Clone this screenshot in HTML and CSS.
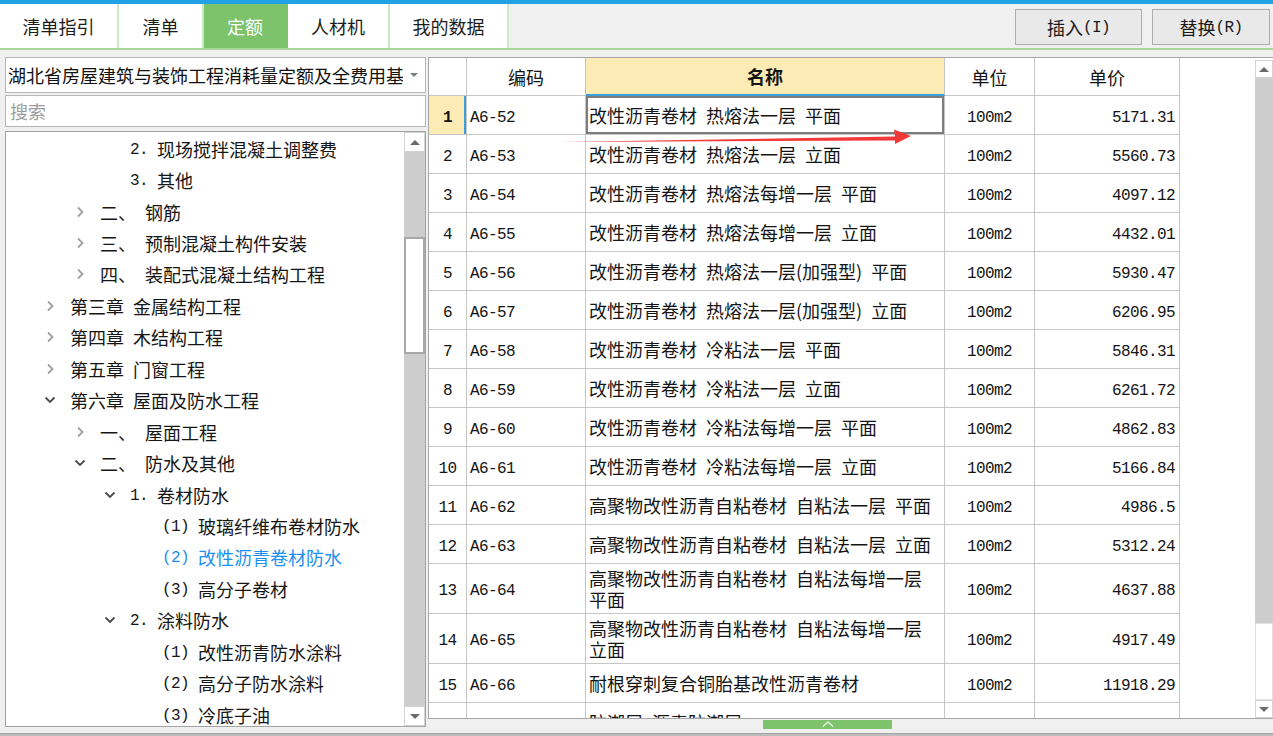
FILE: index.html
```html
<!DOCTYPE html>
<html lang="zh-CN">
<head>
<meta charset="utf-8">
<title>定额</title>
<link rel="stylesheet" href="styles.css">
</head>
<body>
<div class="app">
  <div class="topline"></div>
  <div class="toolbar">
    <div class="tabs">
      <div class="tab w1">清单指引</div>
      <div class="tab w2">清单</div>
      <div class="tab w3 active">定额</div>
      <div class="tab w4">人材机</div>
      <div class="tab w5">我的数据</div>
    </div>
    <div class="actions">
      <button class="btn b1">插入<span class="mono">(I)</span></button>
      <button class="btn b2">替换<span class="mono">(R)</span></button>
    </div>
  </div>

  <div class="main">
    <aside class="left">
      <div class="select">
        <span class="val">湖北省房屋建筑与装饰工程消耗量定额及全费用基价表（2018）</span>
        <span class="caret"></span>
      </div>
      <div class="search">搜索</div>
      <div class="treebox">
        <ul class="tree">
          <li class="l2"><span class="slot"></span><span class="pfx mono">2.</span><span>现场搅拌混凝土调整费</span></li>
          <li class="l2"><span class="slot"></span><span class="pfx mono">3.</span><span>其他</span></li>
          <li class="l1"><span class="slot"><svg class="chev" viewBox="0 0 12 12"><path d="M4 1.5 L8.5 6 L4 10.5"/></svg></span><span class="pfx cn">二、</span><span>钢筋</span></li>
          <li class="l1"><span class="slot"><svg class="chev" viewBox="0 0 12 12"><path d="M4 1.5 L8.5 6 L4 10.5"/></svg></span><span class="pfx cn">三、</span><span>预制混凝土构件安装</span></li>
          <li class="l1"><span class="slot"><svg class="chev" viewBox="0 0 12 12"><path d="M4 1.5 L8.5 6 L4 10.5"/></svg></span><span class="pfx cn">四、</span><span>装配式混凝土结构工程</span></li>
          <li class="l0"><span class="slot"><svg class="chev" viewBox="0 0 12 12"><path d="M4 1.5 L8.5 6 L4 10.5"/></svg></span><span class="pfx ch">第三章</span><span>金属结构工程</span></li>
          <li class="l0"><span class="slot"><svg class="chev" viewBox="0 0 12 12"><path d="M4 1.5 L8.5 6 L4 10.5"/></svg></span><span class="pfx ch">第四章</span><span>木结构工程</span></li>
          <li class="l0"><span class="slot"><svg class="chev" viewBox="0 0 12 12"><path d="M4 1.5 L8.5 6 L4 10.5"/></svg></span><span class="pfx ch">第五章</span><span>门窗工程</span></li>
          <li class="l0"><span class="slot"><svg class="chev open" viewBox="0 0 12 12"><path d="M1.5 3.5 L6 8 L10.5 3.5"/></svg></span><span class="pfx ch">第六章</span><span>屋面及防水工程</span></li>
          <li class="l1"><span class="slot"><svg class="chev" viewBox="0 0 12 12"><path d="M4 1.5 L8.5 6 L4 10.5"/></svg></span><span class="pfx cn">一、</span><span>屋面工程</span></li>
          <li class="l1"><span class="slot"><svg class="chev open" viewBox="0 0 12 12"><path d="M1.5 3.5 L6 8 L10.5 3.5"/></svg></span><span class="pfx cn">二、</span><span>防水及其他</span></li>
          <li class="l2"><span class="slot"><svg class="chev open" viewBox="0 0 12 12"><path d="M1.5 3.5 L6 8 L10.5 3.5"/></svg></span><span class="pfx mono">1.</span><span>卷材防水</span></li>
          <li class="l3"><span class="slot"></span><span class="pfx mono p3">(1)</span><span>玻璃纤维布卷材防水</span></li>
          <li class="l3 sel"><span class="slot"></span><span class="pfx mono p3">(2)</span><span>改性沥青卷材防水</span></li>
          <li class="l3"><span class="slot"></span><span class="pfx mono p3">(3)</span><span>高分子卷材</span></li>
          <li class="l2"><span class="slot"><svg class="chev open" viewBox="0 0 12 12"><path d="M1.5 3.5 L6 8 L10.5 3.5"/></svg></span><span class="pfx mono">2.</span><span>涂料防水</span></li>
          <li class="l3"><span class="slot"></span><span class="pfx mono p3">(1)</span><span>改性沥青防水涂料</span></li>
          <li class="l3"><span class="slot"></span><span class="pfx mono p3">(2)</span><span>高分子防水涂料</span></li>
          <li class="l3"><span class="slot"></span><span class="pfx mono p3">(3)</span><span>冷底子油</span></li>
        </ul>
        <div class="vscroll tree-scroll">
          <div class="sbtn up"><span class="tri-up"></span></div>
          <div class="track t1"></div>
          <div class="thumb"></div>
          <div class="track fill"></div>
          <div class="sbtn down"><span class="tri-down"></span></div>
        </div>
      </div>
    </aside>

    <section class="right">
      <div class="frame">
        <div class="gridclip">
          <table class="grid">
            <colgroup>
              <col class="c-num"><col class="c-code"><col class="c-name"><col class="c-unit"><col class="c-price">
            </colgroup>
            <thead>
              <tr class="hrow">
                <th class="num"></th>
                <th>编码</th>
                <th class="hname">名称</th>
                <th>单位</th>
                <th>单价</th>
              </tr>
            </thead>
            <tbody>
              <tr class="cur"><td class="num">1</td><td class="code">A6-52</td><td class="name focus">改性沥青卷材&ensp;热熔法一层&ensp;平面</td><td class="unit">100m2</td><td class="price">5171.31</td></tr>
              <tr><td class="num">2</td><td class="code">A6-53</td><td class="name">改性沥青卷材&ensp;热熔法一层&ensp;立面</td><td class="unit">100m2</td><td class="price">5560.73</td></tr>
              <tr><td class="num">3</td><td class="code">A6-54</td><td class="name">改性沥青卷材&ensp;热熔法每增一层&ensp;平面</td><td class="unit">100m2</td><td class="price">4097.12</td></tr>
              <tr><td class="num">4</td><td class="code">A6-55</td><td class="name">改性沥青卷材&ensp;热熔法每增一层&ensp;立面</td><td class="unit">100m2</td><td class="price">4432.01</td></tr>
              <tr><td class="num">5</td><td class="code">A6-56</td><td class="name">改性沥青卷材&ensp;热熔法一层(加强型)&ensp;平面</td><td class="unit">100m2</td><td class="price">5930.47</td></tr>
              <tr><td class="num">6</td><td class="code">A6-57</td><td class="name">改性沥青卷材&ensp;热熔法一层(加强型)&ensp;立面</td><td class="unit">100m2</td><td class="price">6206.95</td></tr>
              <tr><td class="num">7</td><td class="code">A6-58</td><td class="name">改性沥青卷材&ensp;冷粘法一层&ensp;平面</td><td class="unit">100m2</td><td class="price">5846.31</td></tr>
              <tr><td class="num">8</td><td class="code">A6-59</td><td class="name">改性沥青卷材&ensp;冷粘法一层&ensp;立面</td><td class="unit">100m2</td><td class="price">6261.72</td></tr>
              <tr><td class="num">9</td><td class="code">A6-60</td><td class="name">改性沥青卷材&ensp;冷粘法每增一层&ensp;平面</td><td class="unit">100m2</td><td class="price">4862.83</td></tr>
              <tr><td class="num">10</td><td class="code">A6-61</td><td class="name">改性沥青卷材&ensp;冷粘法每增一层&ensp;立面</td><td class="unit">100m2</td><td class="price">5166.84</td></tr>
              <tr><td class="num">11</td><td class="code">A6-62</td><td class="name">高聚物改性沥青自粘卷材&ensp;自粘法一层&ensp;平面</td><td class="unit">100m2</td><td class="price">4986.5</td></tr>
              <tr><td class="num">12</td><td class="code">A6-63</td><td class="name">高聚物改性沥青自粘卷材&ensp;自粘法一层&ensp;立面</td><td class="unit">100m2</td><td class="price">5312.24</td></tr>
              <tr class="tall"><td class="num">13</td><td class="code">A6-64</td><td class="name">高聚物改性沥青自粘卷材&ensp;自粘法每增一层&ensp;平面</td><td class="unit">100m2</td><td class="price">4637.88</td></tr>
              <tr class="tall"><td class="num">14</td><td class="code">A6-65</td><td class="name">高聚物改性沥青自粘卷材&ensp;自粘法每增一层&ensp;立面</td><td class="unit">100m2</td><td class="price">4917.49</td></tr>
              <tr><td class="num">15</td><td class="code">A6-66</td><td class="name">耐根穿刺复合铜胎基改性沥青卷材</td><td class="unit">100m2</td><td class="price">11918.29</td></tr>
              <tr><td class="num">16</td><td class="code">A6-67</td><td class="name">防潮层&ensp;沥青防潮层</td><td class="unit">100m2</td><td class="price">466.65</td></tr>
            </tbody>
          </table>
        </div>
        <div class="filler"></div>
        <div class="vscroll grid-scroll">
          <div class="sbtn up"><span class="tri-up"></span></div>
          <div class="track fill"></div>
          <div class="thumb small"></div>
          <div class="sbtn down"><span class="tri-down"></span></div>
        </div>
      </div>
      <div class="dock">
        <div class="handle"><svg viewBox="0 0 16 8"><path d="M3 6.5 L8 2 L13 6.5"/></svg></div>
      </div>
    </section>
  </div>
  <div class="footer"></div>

  <svg class="annot" width="1273" height="736" viewBox="0 0 1273 736">
    <polygon points="561,142 895,136.5 894,129.5 911,136 895,144 895,140.5" />
  </svg>
</div>
</body>
</html>
```

FILE: styles.css
```css
* { box-sizing: border-box; margin: 0; padding: 0; }

html, body {
  width: 1273px;
  height: 736px;
  overflow: hidden;
}

body {
  background: #f0f0f0;
  font-family: "Noto Sans CJK SC", "Noto Sans", sans-serif;
  font-size: 18px;
  color: #141414;
}

.mono {
  font-family: "Liberation Mono", "DejaVu Sans Mono", monospace;
  font-size: 16px;
  letter-spacing: -0.6px;
}

.app {
  position: relative;
  display: flex;
  flex-direction: column;
  height: 736px;
}

.topline {
  height: 4px;
  background: #22a1e6;
}

/* ---------- toolbar ---------- */
.toolbar {
  height: 46px;
  display: flex;
  justify-content: space-between;
  border-bottom: 2px solid #a8d99b;
  background: #f0f0f0;
}

.tabs {
  display: flex;
  height: 44px;
}

.tab {
  height: 44px;
  display: flex;
  align-items: center;
  justify-content: center;
  background: #fff;
  border-right: 2px solid #cbeac1;
  font-size: 18px;
  color: #1c1c1c;
}

.tab.w1 { width: 119px; }
.tab.w2 { width: 85px; }
.tab.w3 { width: 84px; }
.tab.w4 { width: 102px; }
.tab.w5 { width: 119px; }

.tab.active {
  background: #7dc36c;
  color: #fff;
  border-right-color: #7dc36c;
}

.actions {
  display: flex;
  gap: 10px;
  padding-top: 5px;
  padding-right: 3px;
}

.btn {
  height: 36px;
  border: 1px solid #adadad;
  background: #e9e9e9;
  font-family: "Noto Sans CJK SC", sans-serif;
  font-size: 18px;
  color: #1a1a1a;
  display: flex;
  align-items: center;
  justify-content: center;
}

.btn .mono { font-size: 16px; padding-top: 2px; }

.btn.b1 { width: 127px; }
.btn.b2 { width: 118px; }

/* ---------- main ---------- */
.main {
  height: 683px;
  display: flex;
}

.left {
  width: 427px;
  padding: 7px 1px 0 5px;
  display: flex;
  flex-direction: column;
}

.select {
  height: 36px;
  border: 1px solid #b7b7b7;
  background: #fff;
  display: flex;
  align-items: center;
  padding-left: 2px;
}

.select .val {
  width: 395px;
  overflow: hidden;
  white-space: nowrap;
  color: #111;
}

.caret {
  margin-left: 7px;
  width: 0;
  height: 0;
  border-left: 4px solid transparent;
  border-right: 4px solid transparent;
  border-top: 4px solid #7d7d7d;
}

.search {
  margin-top: 2px;
  height: 32px;
  border: 1px solid #b7b7b7;
  background: #fff;
  color: #9d9d9d;
  padding-left: 4px;
  display: flex;
  align-items: center;
}

.treebox {
  margin-top: 4px;
  height: 596px;
  border: 1px solid #a3a3a3;
  background: #fff;
  display: flex;
}

.tree {
  flex: 1;
  list-style: none;
  overflow: hidden;
  padding-top: 1px;
}

.tree li {
  height: 31.45px;
  display: flex;
  align-items: center;
  white-space: nowrap;
  color: #161616;
}

.tree li.l0 { padding-left: 34px; }
.tree li.l1 { padding-left: 64px; }
.tree li.l2 { padding-left: 94px; }
.tree li.l3 { padding-left: 126px; }

.tree li.sel { color: #1d8ff0; }

.slot {
  width: 30px;
  flex: none;
  display: flex;
  align-items: center;
}

.chev {
  width: 12px;
  height: 12px;
  margin-left: 4px;
  fill: none;
  stroke: #a0a0a0;
  stroke-width: 1.8;
}

.chev.open { stroke: #4a4a4a; }

.pfx {
  display: inline-block;
  flex: none;
}

.pfx.mono { width: 27px; padding-top: 2px; }
.pfx.mono.p3 { width: 36px; }
.pfx.cn { width: 45px; }
.pfx.ch { width: 63px; }

/* ---------- scrollbars ---------- */
.vscroll {
  display: flex;
  flex-direction: column;
  flex: none;
}

.tree-scroll {
  width: 21px;
  background: #cdcdcd;
}

.sbtn {
  background: #fff;
  border: 1px solid #d3d3d3;
  display: flex;
  align-items: center;
  justify-content: center;
  flex: none;
}

.tree-scroll .sbtn { height: 20px; }

.tri-up {
  width: 0;
  height: 0;
  border-left: 5px solid transparent;
  border-right: 5px solid transparent;
  border-bottom: 5px solid #6b6b6b;
}

.tri-down {
  width: 0;
  height: 0;
  border-left: 5px solid transparent;
  border-right: 5px solid transparent;
  border-top: 5px solid #6b6b6b;
}

.track { background: #cdcdcd; }
.track.t1 { height: 85px; flex: none; }
.track.fill { flex: 1; }

.thumb {
  height: 117px;
  flex: none;
  background: #fff;
  border: 2px solid #a8a8a8;
}

/* ---------- right grid ---------- */
.right {
  flex: 1;
  margin-left: 1px;
  padding-top: 7px;
  display: flex;
  flex-direction: column;
}

.frame {
  height: 662px;
  border-top: 1px solid #a6a6a6;
  border-left: 1px solid #a6a6a6;
  border-bottom: 1px solid #a6a6a6;
  background: #fff;
  display: flex;
}

.gridclip {
  width: 751px;
  height: 660px;
  overflow: hidden;
  flex: none;
}

.grid {
  width: 751px;
  table-layout: fixed;
  border-collapse: separate;
  border-spacing: 0;
}

.c-num { width: 38px; }
.c-code { width: 119px; }
.c-name { width: 359px; }
.c-unit { width: 90px; }
.c-price { width: 145px; }

.grid th,
.grid td {
  border-right: 1px solid #c6c6c6;
  border-bottom: 1px solid #c6c6c6;
  vertical-align: middle;
  overflow: hidden;
  white-space: nowrap;
}

.grid tr { height: 39px; }
.grid tr.hrow { height: 38px; }
.grid tr.tall { height: 50px; }

.grid th {
  font-weight: 400;
  font-size: 18px;
  text-align: center;
  background: #fff;
}

.grid th.hname {
  background: #fdebb5;
  font-weight: 700;
  border-bottom: 2px solid #3c9fd9;
}

.grid td.num,
.grid td.code,
.grid td.unit,
.grid td.price {
  font-family: "Liberation Mono", "DejaVu Sans Mono", monospace;
  font-size: 16px;
  letter-spacing: -0.6px;
  line-height: 18px;
  padding-top: 5px;
}

.grid td.num { text-align: center; }

.grid tr.cur td.num {
  background: #fdebb5;
  font-weight: 700;
  box-shadow: inset -2px 0 0 #3c9fd9;
}

.grid td.code { padding-left: 3px; }

.grid td.name {
  padding-left: 3px;
  line-height: 21px;
  white-space: normal;
}

.grid td.focus {
  box-shadow: inset 0 0 0 2px #7c7c7c;
}

.grid td.unit { text-align: center; }

.grid td.price {
  text-align: right;
  padding-right: 4px;
}

.filler {
  flex: 1;
  background: #fff;
}

.grid-scroll {
  width: 18px;
  background: #fff;
  padding-top: 2px;
}

.grid-scroll .sbtn { height: 18px; }
.grid-scroll .track.fill { background: #cdcdcd; }
.thumb.small {
  height: 77px;
  border: 1px solid #e2e2e2;
}

.dock {
  height: 15px;
  padding-left: 335px;
}

.handle {
  width: 129px;
  height: 9px;
  margin-top: 1px;
  background: #7dc36c;
  display: flex;
  justify-content: center;
}

.handle svg {
  width: 16px;
  height: 8px;
  fill: none;
  stroke: #e6f4e0;
  stroke-width: 1.4;
}

.footer {
  height: 3px;
  background: #bcbcbc;
  border-top: 1px solid #a4a4a4;
}

/* annotation arrow drawn over the grid */
.annot {
  position: absolute;
  left: 0;
  top: 0;
  pointer-events: none;
}

.annot polygon { fill: #f23838; }
```
